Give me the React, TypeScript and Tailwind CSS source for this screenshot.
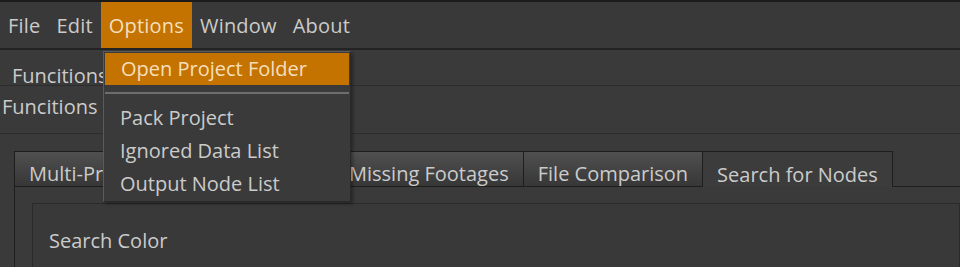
import React from 'react';

const menus = ['File', 'Edit', 'Options', 'Window', 'About'];

const tabs = [
  { label: 'Multi-Project Manager', w: 'w-[226px]' },
  { label: 'Statistics', w: 'w-[96px]' },
  { label: 'Missing Footages', w: '' },
  { label: 'File Comparison', w: '' },
];

const App: React.FC = () => {
  return (
    <div
      className="relative w-[960px] h-[267px] overflow-hidden bg-[#3a3a3a] text-[20px] text-[#cbcbcb] leading-none"
      style={{ fontFamily: '"Open Sans", "Noto Sans", sans-serif' }}
    >
      {/* top edge */}
      <div className="h-[2px] bg-[#1b1b1b]" />

      {/* menu bar */}
      <div className="flex h-[48px] bg-[#393939] border-b-2 border-[#232323]">
        {menus.map((m) => (
          <div
            key={m}
            className={`flex items-center px-2 pt-[2px] tracking-[0.2px] ${m === 'Options' ? 'bg-[#c57300] text-[#f4dfbd]' : ''}`}
          >
            {m}
          </div>
        ))}
      </div>

      {/* function rows */}
      <div className="flex items-center h-[36px] pl-3 pt-[16px] border-b border-[#2d2d2d]">Funcitions</div>
      <div className="flex items-center h-[48px] pl-[2px] pb-[6px] border-b border-[#2d2d2d]">Funcitions</div>

      {/* tab widget */}
      <div className="ml-[14px] mt-[17px]">
        <div className="flex h-[36px]">
          {tabs.map((t) => (
            <div
              key={t.label}
              className={`flex items-center px-[14px] pt-[10px] border border-[#1e1e1e] -ml-px first:ml-0 bg-gradient-to-b from-[#505050] to-[#373737] whitespace-nowrap overflow-hidden ${t.w}`}
            >
              {t.label}
            </div>
          ))}
          <div className="flex items-center px-[14px] pt-[10px] border border-b-0 border-[#1e1e1e] -ml-px bg-[#3c3c3c] whitespace-nowrap">
            Search for Nodes
          </div>
          <div className="flex-1 border-b border-[#1e1e1e]" />
        </div>
        <div className="border-l border-[#1e1e1e] h-[200px] pl-[17px] pt-[16px]">
          <div className="border border-[#2a2a2a] h-[200px] pl-[16px] pt-[27px] bg-[#393939]">
            Search Color
          </div>
        </div>
      </div>

      {/* Options dropdown */}
      <div className="absolute left-[103px] top-[51px] w-[248px] bg-[#3a3a3a] border border-[#5b5b5b] border-r-[#2a2a2a] border-b-[#2a2a2a] py-px shadow-[2px_2px_3px_rgba(0,0,0,0.35)]">
        <div className="flex items-center h-[32px] mx-px pl-4 bg-[#c57300] text-[#f4dfbd]">Open Project Folder</div>
        <div className="h-[2px] bg-[#6d6d6d] mt-[7px] mb-[7px] mx-px" />
        <div className="flex items-center h-[33px] pl-4">Pack Project</div>
        <div className="flex items-center h-[33px] pl-4">Ignored Data List</div>
        <div className="flex items-center h-[33px] pl-4">Output Node List</div>
      </div>
    </div>
  );
};

export default App;
